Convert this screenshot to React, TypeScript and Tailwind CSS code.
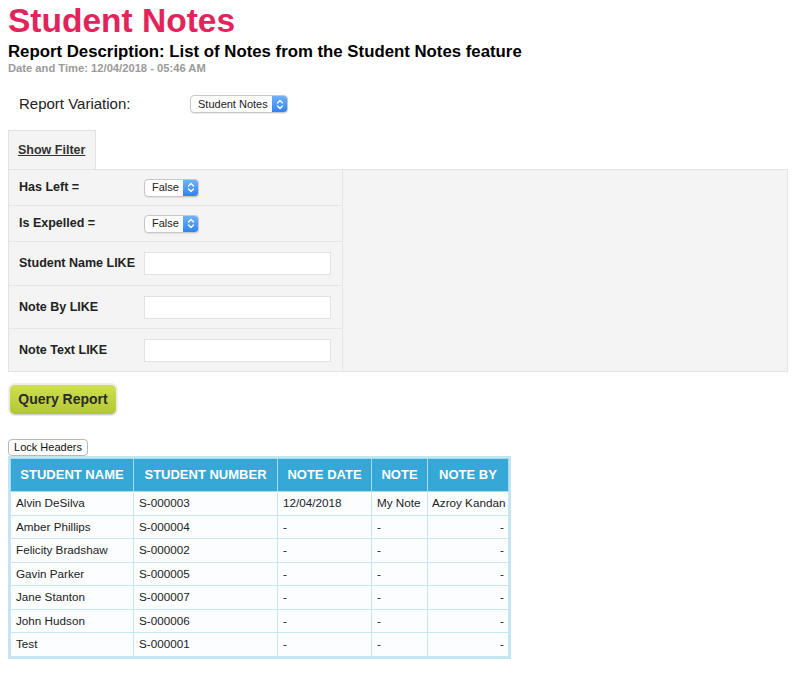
import React from "react";

const Chevrons = () => (
  <svg width="8" height="11" viewBox="0 0 8 11" fill="none">
    <path d="M1.5 4 L4 1.5 L6.5 4" stroke="white" strokeWidth="1.3" strokeLinecap="round" strokeLinejoin="round" />
    <path d="M1.5 7 L4 9.5 L6.5 7" stroke="white" strokeWidth="1.3" strokeLinecap="round" strokeLinejoin="round" />
  </svg>
);

function MacSelect({ label, width }: { label: string; width: string }) {
  return (
    <div className={`flex h-[18px] ${width} items-stretch overflow-hidden rounded-[4px] border border-[#c8c8c8] bg-white shadow-[0_1px_1px_rgba(0,0,0,0.08)]`}>
      <div className="flex flex-1 items-center pl-[7px] text-[11px] text-[#222]">{label}</div>
      <div className="flex w-[15px] items-center justify-center bg-gradient-to-b from-[#6fb2ff] to-[#2f83f5]">
        <Chevrons />
      </div>
    </div>
  );
}

const rows = [
  ["Alvin DeSilva", "S-000003", "12/04/2018", "My Note", "Azroy Kandan"],
  ["Amber Phillips", "S-000004", "-", "-", "-"],
  ["Felicity Bradshaw", "S-000002", "-", "-", "-"],
  ["Gavin Parker", "S-000005", "-", "-", "-"],
  ["Jane Stanton", "S-000007", "-", "-", "-"],
  ["John Hudson", "S-000006", "-", "-", "-"],
  ["Test", "S-000001", "-", "-", "-"],
];

const filterRows = [
  { label: "Has Left =", h: "h-[36px]", kind: "sel" },
  { label: "Is Expelled =", h: "h-[36px]", kind: "sel" },
  { label: "Student Name LIKE", h: "h-[44px]", kind: "inp" },
  { label: "Note By LIKE", h: "h-[43px]", kind: "inp" },
  { label: "Note Text LIKE", h: "h-[42px]", kind: "inp", last: true },
];

export default function App() {
  return (
    <div className="min-h-[673px] bg-white pl-[8px] text-[#111]" style={{ fontFamily: '"Liberation Sans", Arial, sans-serif' }}>
      <h1 className="text-[33.5px] font-bold leading-[42px] text-[#e2245c]">Student Notes</h1>
      <div className="text-[16.8px] font-bold leading-[19px] text-black">
        Report Description: List of Notes from the Student Notes feature
      </div>
      <div className="text-[11.2px] font-bold leading-[14px] text-[#9a9a9a]">Date and Time: 12/04/2018 - 05:46 AM</div>

      <div className="mt-[20px] flex h-[18px] items-center">
        <div className="ml-[11px] w-[171px] text-[15px] text-[#222]">Report Variation:</div>
        <MacSelect label="Student Notes" width="w-[98px]" />
      </div>

      <div className="mt-[17px] flex">
        <div className="flex h-[39px] w-[88px] items-center border border-b-0 border-[#e3e3e3] bg-[#f4f4f4] pl-[9px]">
          <span className="text-[12.5px] font-bold text-[#333] underline">Show Filter</span>
        </div>
      </div>

      <div className="flex h-[203px] w-[780px] border border-[#e3e3e3] bg-[#f4f4f4]">
        <div className="flex w-[334px] flex-col border-r border-[#e6e6e6]">
          {filterRows.map((r, i) => (
            <div key={i} className={`flex ${r.h} shrink-0 items-center ${r.last ? "" : "border-b border-[#e6e6e6]"}`}>
              <div className="w-[135px] pl-[10px] text-[12.5px] font-bold text-[#222]">{r.label}</div>
              {r.kind === "sel" ? (
                <MacSelect label="False" width="w-[55px]" />
              ) : (
                <div className="h-[23px] w-[187px] border border-[#e2e2e2] bg-white" />
              )}
            </div>
          ))}
        </div>
        <div className="flex-1" />
      </div>

      <div className="mt-[11px] inline-flex rounded-[7px] bg-[#eeeeee] p-[2px]">
        <div className="flex h-[29px] w-[106px] items-center justify-center rounded-[5px] bg-gradient-to-b from-[#cfdf50] to-[#b3c82f] text-[14px] font-bold text-[#2a2a2a] shadow-[0_1px_1px_rgba(0,0,0,0.15)]">
          Query Report
        </div>
      </div>

      <div className="mt-[23px] flex">
        <div className="flex h-[17px] w-[80px] items-center justify-center rounded-[4px] border border-[#b8b8b8] bg-white text-[11px] text-[#111]">
          Lock Headers
        </div>
      </div>

      <div className="inline-block border-2 border-[#c3e5f1]">
        <table className="w-[498px] table-fixed border-collapse text-[11.7px]">
          <colgroup>
            <col className="w-[123px]" />
            <col className="w-[144px]" />
            <col className="w-[94px]" />
            <col className="w-[56px]" />
            <col className="w-[81px]" />
          </colgroup>
          <thead>
            <tr className="h-[33px] bg-[#36a8d5]">
              {["STUDENT NAME", "STUDENT NUMBER", "NOTE DATE", "NOTE", "NOTE BY"].map((h, i) => (
                <th key={i} className="whitespace-nowrap border border-[#a8dbee] px-[2px] text-center text-[13px] font-bold text-white">
                  {h}
                </th>
              ))}
            </tr>
          </thead>
          <tbody>
            {rows.map((r, i) => (
              <tr key={i} className="h-[23.5px] bg-[#fbfdff]">
                {r.map((c, j) => (
                  <td
                    key={j}
                    className={`whitespace-nowrap border border-[#c9e7f2] leading-[14px] text-[#222] ${j === 4 ? "px-[4px] text-right" : "px-[5px] text-left"}`}
                  >
                    {c}
                  </td>
                ))}
              </tr>
            ))}
          </tbody>
        </table>
      </div>
    </div>
  );
}
